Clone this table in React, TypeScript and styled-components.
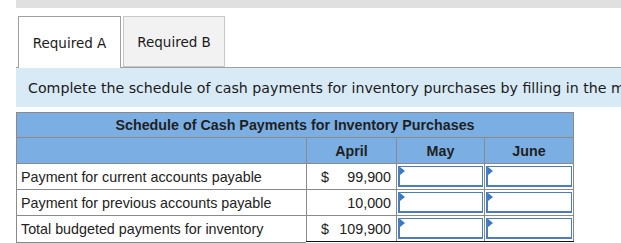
import React from "react";
import styled, { createGlobalStyle } from "styled-components";

const Global = createGlobalStyle`
  html, body { margin: 0; padding: 0; background: #fff; }
  body { font-family: "DejaVu Sans", Verdana, sans-serif; overflow: hidden; }
`;

const Page = styled.div`
  padding-left: 16px;
  width: 621px;
  box-sizing: border-box;
`;

const TopBar = styled.div`
  height: 8px;
  background: #e0e0e0;
`;

const Tabs = styled.div`
  display: flex;
  gap: 2px;
  margin-top: 8px;
  padding-left: 2px;
  align-items: flex-start;
`;

const Tab = styled.div<{ $active?: boolean }>`
  box-sizing: border-box;
  height: ${(p) => (p.$active ? "52px" : "51px")};
  width: ${(p) => (p.$active ? "103px" : "102px")};
  display: flex;
  align-items: center;
  justify-content: center;
  font-size: 13.5px;
  color: #1a1a1a;
  background: ${(p) => (p.$active ? "#ffffff" : "#f2f2f2")};
  border: 1px solid ${(p) => (p.$active ? "#a0a0a0" : "#c8c8c8")};
  border-bottom: ${(p) => (p.$active ? "none" : "1px solid #c8c8c8")};
  margin-bottom: ${(p) => (p.$active ? "-1px" : "0")};
  position: relative;
  z-index: ${(p) => (p.$active ? 1 : 0)};
`;

const Instruction = styled.div`
  box-sizing: border-box;
  height: 40px;
  background: #d9eaf7;
  border-top: 1px solid #a0a0a0;
  display: flex;
  align-items: center;
  padding-left: 12px;
  font-size: 14.2px;
  color: #1a1a1a;
  white-space: nowrap;
  overflow: hidden;
`;

const Table = styled.table`
  margin-top: 5px;
  border-collapse: collapse;
  font-family: "Liberation Sans", Arial, sans-serif;
  font-size: 14.3px;
  color: #222;
  width: 557px;
  table-layout: fixed;
`;

const TitleCell = styled.th`
  background: #7bafe4;
  border: 1px solid #8a8a8a;
  height: 24px;
  padding: 0;
  font-weight: bold;
  text-align: center;
  color: #1f1f1f;
`;

const HeadCell = styled.th`
  background: #7bafe4;
  border: 1px solid #8a8a8a;
  height: 25px;
  padding: 0;
  font-weight: bold;
  text-align: center;
  color: #1f1f1f;
`;

const LabelCell = styled.td`
  border: 1px solid #8a8a8a;
  height: 23px;
  padding: 0 0 0 4px;
  white-space: nowrap;
`;

const AmountCell = styled.td<{ $total?: boolean }>`
  border: 1px solid #8a8a8a;
  border-top: ${(p) => (p.$total ? "1px solid #111" : "1px solid #8a8a8a")};
  border-bottom: ${(p) => (p.$total ? "3px double #111" : "1px solid #8a8a8a")};
  height: 23px;
  padding: 0 5px 0 14px;
`;

const Amount = styled.div`
  display: flex;
  justify-content: space-between;
`;

const InputCell = styled.td<{ $total?: boolean }>`
  border: 1px solid #8a8a8a;
  border-top: ${(p) => (p.$total ? "1px solid #111" : "1px solid #8a8a8a")};
  border-bottom: ${(p) => (p.$total ? "3px double #111" : "1px solid #8a8a8a")};
  height: 23px;
  padding: 1px;
`;

const InputBox = styled.div`
  position: relative;
  box-sizing: border-box;
  height: 21px;
  border: 1px solid #4a7cc0;
  border-left-width: 2px;
  border-bottom-width: 2px;
  background: #fff;
`;

const Flag = styled.span`
  position: absolute;
  left: 0;
  top: 0;
  width: 0;
  height: 0;
  border-top: 4px solid transparent;
  border-bottom: 4px solid transparent;
  border-left: 5px solid #3a78c8;
`;

const rows = [
  { label: "Payment for current accounts payable", sign: "$", value: "99,900" },
  { label: "Payment for previous accounts payable", sign: "", value: "10,000" },
  { label: "Total budgeted payments for inventory", sign: "$", value: "109,900", total: true },
];

export default function App() {
  return (
    <Page>
      <Global />
      <TopBar />
      <Tabs>
        <Tab $active>Required A</Tab>
        <Tab>Required B</Tab>
      </Tabs>
      <Instruction>
        Complete the schedule of cash payments for inventory purchases by filling in the missing amounts.
      </Instruction>
      <Table>
        <colgroup>
          <col style={{ width: 290 }} />
          <col style={{ width: 90 }} />
          <col style={{ width: 88 }} />
          <col style={{ width: 89 }} />
        </colgroup>
        <thead>
          <tr>
            <TitleCell colSpan={4}>Schedule of Cash Payments for Inventory Purchases</TitleCell>
          </tr>
          <tr>
            <HeadCell />
            <HeadCell>April</HeadCell>
            <HeadCell>May</HeadCell>
            <HeadCell>June</HeadCell>
          </tr>
        </thead>
        <tbody>
          {rows.map((r) => (
            <tr key={r.label}>
              <LabelCell>{r.label}</LabelCell>
              <AmountCell $total={r.total}>
                <Amount>
                  <span>{r.sign}</span>
                  <span>{r.value}</span>
                </Amount>
              </AmountCell>
              <InputCell $total={r.total}>
                <InputBox>
                  <Flag />
                </InputBox>
              </InputCell>
              <InputCell $total={r.total}>
                <InputBox>
                  <Flag />
                </InputBox>
              </InputCell>
            </tr>
          ))}
        </tbody>
      </Table>
    </Page>
  );
}
